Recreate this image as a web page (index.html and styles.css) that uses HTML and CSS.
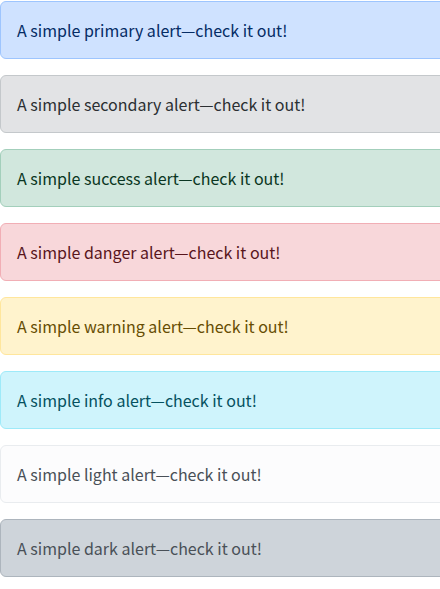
FILE: index.html
```html
<!DOCTYPE html>
<html>
<head>
<meta charset="utf-8">
<link rel="stylesheet" href="styles.css">
</head>
<body>
<div class="stack">
  <div class="alert alert-primary">A simple primary alert—check it out!</div>
  <div class="alert alert-secondary">A simple secondary alert—check it out!</div>
  <div class="alert alert-success">A simple success alert—check it out!</div>
  <div class="alert alert-danger">A simple danger alert—check it out!</div>
  <div class="alert alert-warning">A simple warning alert—check it out!</div>
  <div class="alert alert-info">A simple info alert—check it out!</div>
  <div class="alert alert-light">A simple light alert—check it out!</div>
  <div class="alert alert-dark">A simple dark alert—check it out!</div>
</div>
</body>
</html>
```
FILE: styles.css
```css
html, body {
  margin: 0;
  padding: 0;
  background: #fff;
  overflow: hidden;
}
body {
  font-family: "Noto Sans CJK KR", "Noto Sans", sans-serif;
  font-size: 16px;
  line-height: 24px;
}
.stack {
  width: 460px;
  padding-top: 1px;
}
.alert {
  padding: 16px;
  margin-bottom: 16px;
  border: 1px solid transparent;
  border-radius: 6px;
}
.alert-primary { color: #052c65; background: #cfe2ff; border-color: #9ec5fe; }
.alert-secondary { color: #2b2f32; background: #e2e3e5; border-color: #c4c8cb; }
.alert-success { color: #0a3622; background: #d1e7dd; border-color: #a3cfbb; }
.alert-danger { color: #58151c; background: #f8d7da; border-color: #f1aeb5; }
.alert-warning { color: #664d03; background: #fff3cd; border-color: #ffe69c; }
.alert-info { color: #055160; background: #cff4fc; border-color: #9eeaf9; }
.alert-light { color: #495057; background: #fcfcfd; border-color: #e9ecef; }
.alert-dark { color: #495057; background: #ced4da; border-color: #adb5bd; }
```
